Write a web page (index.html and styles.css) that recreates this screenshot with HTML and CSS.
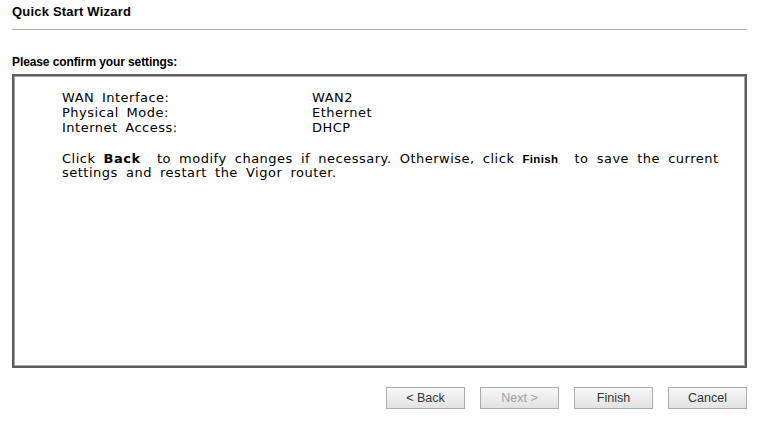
FILE: index.html
```html
<!DOCTYPE html>
<html lang="en">
<head>
    <meta charset="UTF-8">
    <title>Quick Start Wizard</title>
    <link rel="stylesheet" href="styles.css">
</head>
<body>
    <div class="wizard">
        <div class="title">Quick Start Wizard</div>
        <hr class="rule">
        <div class="subtitle">Please confirm your settings:</div>
        <div class="panel">
            <table class="summary">
                <tr><td class="label">WAN Interface:</td><td>WAN2</td></tr>
                <tr><td class="label">Physical Mode:</td><td>Ethernet</td></tr>
                <tr><td class="label">Internet Access:</td><td>DHCP</td></tr>
            </table>
            <p class="note">Click <b>Back</b>&nbsp; to modify changes if necessary. Otherwise, click <b class="small">Finish</b>&nbsp; to save the current settings and restart the Vigor router.</p>
        </div>
        <div class="buttons">
            <button>&lt; Back</button>
            <button disabled>Next &gt;</button>
            <button>Finish</button>
            <button>Cancel</button>
        </div>
    </div>
</body>
</html>
```

FILE: styles.css
```css
body {
    margin: 0;
    background-color: #fff;
    font-family: "DejaVu Sans", Verdana, sans-serif;
    font-size: 13px;
    color: #000;
}

.wizard {
    width: 735px;
    padding: 4px 0 0 12px;
}

.title {
    font-family: "Liberation Sans", Arial, sans-serif;
    font-weight: bold;
    font-size: 13px;
    height: 17px;
    letter-spacing: 0.2px;
}

.rule {
    margin: 8px 0 0 0;
    border: 0;
    border-top: 1px solid #b0b0b0;
    height: 0;
}

.subtitle {
    font-family: "Liberation Sans", Arial, sans-serif;
    font-weight: bold;
    font-size: 12px;
    line-height: 14px;
    margin-top: 25px;
    height: 19px;
    letter-spacing: -0.1px;
}

.panel {
    height: 276px;
    border: 2px solid #5c5c5c;
    box-shadow: inset 1px 1px 0 #a8a8a8, inset -1px -1px 0 #a8a8a8;
    padding: 14px 17px 0 48px;
}

.summary {
    border-collapse: collapse;
    letter-spacing: 0.5px;
    word-spacing: 3px;
}

.summary td {
    padding: 0;
    height: 15px;
    line-height: 15px;
}

.summary .label {
    width: 250px;
}

.note {
    margin: 17px 0 0 0;
    line-height: 14px;
    letter-spacing: 0.5px;
    word-spacing: 3.5px;
}

.note b {
    font-weight: bold;
}

.note .small {
    font-family: "Liberation Sans", Arial, sans-serif;
    font-size: 11.5px;
    letter-spacing: 0.3px;
}

.buttons {
    display: flex;
    justify-content: flex-end;
    gap: 15px;
    margin-top: 19px;
}

button {
    width: 79px;
    height: 22px;
    padding: 0;
    border: 1px solid #ababab;
    background: linear-gradient(#f8f8f8, #e2e2e2);
    font-family: "Liberation Sans", Arial, sans-serif;
    font-size: 12.5px;
    color: #333;
}

button:disabled {
    color: #a0a0a0;
}
```
